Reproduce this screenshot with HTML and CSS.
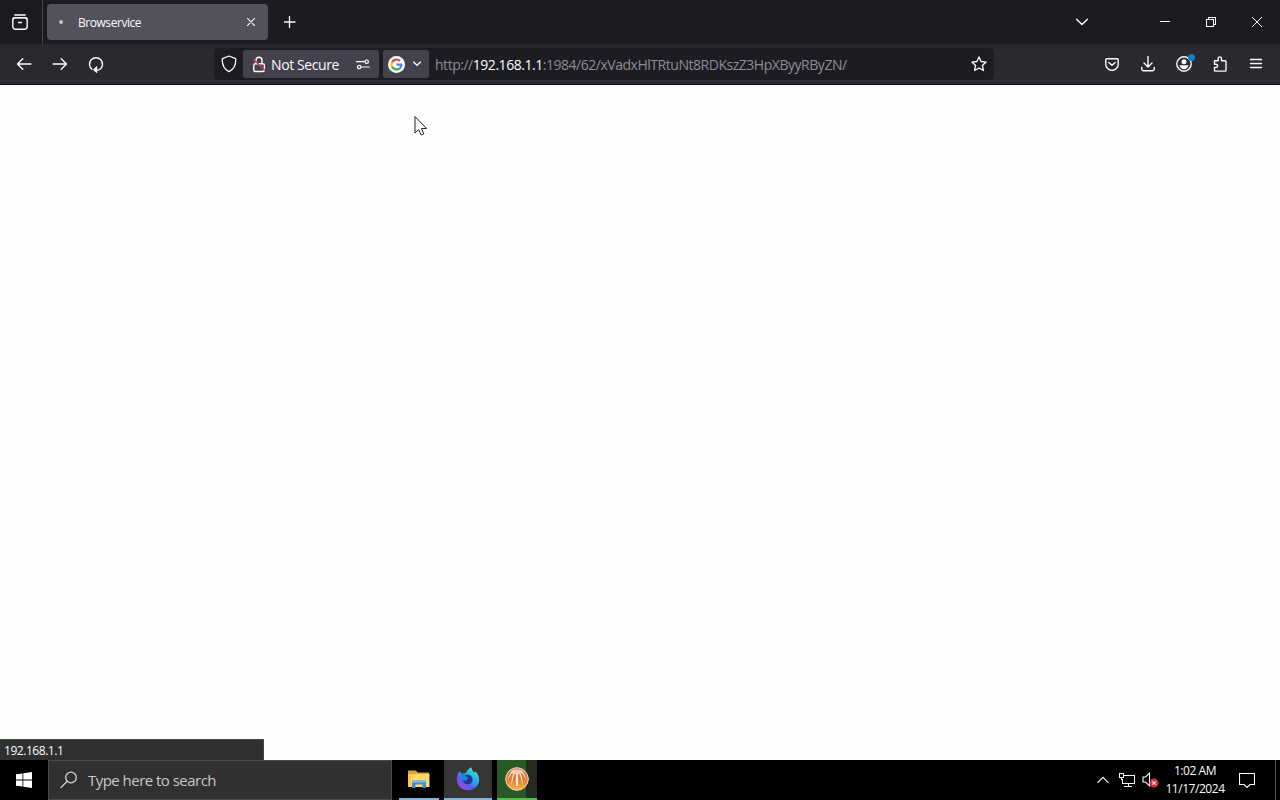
FILE: index.html
```
<!DOCTYPE html>
<html lang="en">
<head>
  <meta charset="utf-8">
  <meta name="viewport" content="width=device-width, initial-scale=1">
  <title>Browservice</title>
  <link rel="stylesheet" href="styles.css">
</head>
<body>
<div class="desktop">
  <!-- tab strip -->
  <div class="tabs-bar">
    <div class="view-button">
      <svg width="16" height="16" viewBox="0 0 16 16"><path d="M2.8 1h10.4" /><rect x=".8" y="3.8" width="14.4" height="11.4" rx="2.6"/><path d="M.9 5.4C1 4 2 3.6 3 3.6h10c1 0 2 .4 2.1 1.8M6.500 8.500h3"/></svg>
    </div>
    <div class="tab">
      <span class="tab-loading"></span>
      <span class="tab-title">Browservice</span>
      <svg class="tab-close" width="8" height="8" viewBox="0 0 8 8"><path d="M.4.4l7.2 7.2M7.6.4L.4 7.6"/></svg>
    </div>
    <svg class="new-tab" width="12" height="12" viewBox="0 0 12 12"><path d="M5.500.5v11M0 6h11"/></svg>
    <div class="window-buttons">
      <svg class="all-tabs" width="12" height="8" viewBox="0 0 12 8"><path d="M.6 1.2L6 6.4l5.4-5.2"/></svg>
      <div class="window-button"><svg width="10" height="10" viewBox="0 0 10 10" shape-rendering="crispEdges"><path d="M0 4.500h10"/></svg></div>
      <div class="window-button"><svg width="10" height="10" viewBox="0 0 10 10" shape-rendering="crispEdges"><path d="M.5 2.500h7v7h-7zM2.500 2V.5h7v7H8"/></svg></div>
      <div class="window-button"><svg width="10" height="10" viewBox="0 0 10 10"><path d="M0 0l10 10M10 0L0 10"/></svg></div>
    </div>
  </div>

  <!-- navigation toolbar -->
  <div class="nav-bar">
    <div class="tool"><svg width="16" height="16" viewBox="0 0 16 16"><path d="M14.800 8H1.600M6.800 2.800L1.500 8l5.300 5.200"/></svg></div>
    <div class="tool"><svg width="16" height="16" viewBox="0 0 16 16"><path d="M1.200 8h13.200M9.200 2.800L14.500 8l-5.300 5.200"/></svg></div>
    <div class="tool"><svg class="reload" width="16" height="18" viewBox="0 0 16 18"><path d="M4 13.300A6.500 6.500 0 1 1 12 13.300C11 14 9.800 14.300 8.600 14.400"/><path class="tip" d="M8.800 10.800v6L5.600 14z"/></svg></div>

    <div class="url-bar">
      <svg class="shield" width="16" height="18" viewBox="0 0 16 18"><path d="M8 1l6 2.300c.5.200.8.600.8 1.100 0 5-1.600 9.600-6.800 12.200C2.800 14 1.200 9.400 1.200 4.400c0-.5.300-.9.800-1.100z"/></svg>
      <div class="identity">
        <svg width="14" height="17" viewBox="0 0 14 17"><path d="M4 7.500V4.300a3 3 0 0 1 6 0v3.200"/><rect x="1.800" y="7.800" width="10.600" height="7.700" rx="1.500"/><path class="slash" d="M1.500 3.500l11 10.500"/></svg>
        <span>Not Secure</span>
      </div>
      <div class="permissions">
        <svg width="16" height="11" viewBox="0 0 16 11"><path d="M1.500 2.700h7.800M6.600 8h7.800"/><circle cx="11.700" cy="2.700" r="1.700"/><circle cx="4.200" cy="8" r="1.700"/></svg>
      </div>
      <div class="engine">
        <svg class="google" width="17" height="17" viewBox="0 0 17 17">
          <circle cx="8.500" cy="8.500" r="8.500" fill="#fff"/>
          <path stroke="#ea4335" d="M4.100 6.200A5 5 0 0 1 12 4.900"/>
          <path stroke="#fbbc05" d="M4.100 10.800a5 5 0 0 1 0-4.600"/>
          <path stroke="#34a853" d="M11.700 12.300a5 5 0 0 1-7.600-1.500"/>
          <path stroke="#4285f4" d="M8.500 8.600h5a5 5 0 0 1-1.800 3.700"/>
        </svg>
        <svg width="8" height="6" viewBox="0 0 8 6"><path d="M.5 1L4 4.300 7.500 1"/></svg>
      </div>
      <div class="url">http://<b>192.168.1.1</b>:1984/62/xVadxHlTRtuNt8RDKszZ3HpXByyRByZN/</div>
      <svg class="star" width="16" height="16" viewBox="0 0 16 16"><path d="M8 .9l2.100 4.600 5 .6-3.700 3.400 1 5L8 12l-4.400 2.500 1-5L.9 6.100l5-.6z"/></svg>
    </div>

    <div class="tools-right">
      <div class="tool"><svg width="14" height="13" viewBox="0 0 14 13"><path d="M1.800.8h10.400c.6 0 1 .4 1 1v4.400a6.200 6.200 0 0 1-12.400 0V1.800c0-.6.4-1 1-1z"/><path d="M3.800 4.500L7 7.300l3.200-2.800"/></svg></div>
      <div class="tool"><svg width="14" height="16" viewBox="0 0 14 16"><path d="M7 .5v10.300M3 7l4 4 4-4M.8 11.500v1.600c0 .9.700 1.600 1.600 1.600h9.200c.9 0 1.600-.7 1.600-1.600v-1.600"/></svg></div>
      <div class="tool account">
        <svg width="16" height="16" viewBox="0 0 16 16"><circle cx="8" cy="8" r="7.200"/><g class="person"><circle cx="8" cy="5.700" r="2.500"/><path d="M3.500 9.300h9c-.3 2.300-2.200 4-4.500 4s-4.200-1.700-4.500-4z"/></g></svg>
        <span class="badge"></span>
      </div>
      <div class="tool"><svg width="16" height="16" viewBox="0 0 16 16"><path d="M2.500 4.800h3.600V2.600a1.700 1.700 0 0 1 3.400 0v2.200h3.700c.5 0 .8.300.8.800v8.700c0 .5-.3.800-.8.800H3.300c-.5 0-.8-.3-.8-.8v-2.900H4a1.600 1.600 0 0 0 0-3.200H2.500z"/></svg></div>
      <div class="tool"><svg width="14" height="12" viewBox="0 0 14 12"><path d="M1.500 1.500h11M1.500 5.500h11M1.500 9.500h11"/></svg></div>
    </div>
  </div>

  <div class="page">
    <svg class="cursor" width="14" height="21" viewBox="0 0 14 21"><path d="M1 1v16l3.700-3.500L7.100 19l2.600-1.100-2.300-5.400h4.900z"/></svg>
    <div class="status">192.168.1.1</div>
  </div>

  <div class="taskbar">
    <div class="start">
      <svg width="16" height="16" viewBox="0 0 16 16"><path d="M0 2.300l6.500-.9v6.200H0zM7.300 1.300L16 0v7.600H7.300zM0 8.400h6.500v6.200L0 13.700zM7.300 8.400H16V16l-8.700-1.200z"/></svg>
    </div>
    <div class="search">
      <svg width="18" height="18" viewBox="0 0 18 18"><circle cx="11" cy="6.500" r="5.300"/><path d="M7.200 10.300L1 16.500"/></svg>
      <span>Type here to search</span>
    </div>
    <div class="task explorer">
      <svg width="22" height="20" viewBox="0 0 22 20">
        <path fill="#e3a126" d="M0 1.500h8l1.500 2H21v14H0z"/>
        <path fill="#ffd969" d="M0 5h21.500v13H0z"/>
        <path fill="#fcc64e" d="M0 5h3v13H0z"/>
        <path fill="#3f8ed0" d="M4 11.500h14V19h-3.500v-3.500h-7V19H4z"/>
        <path fill="#78bff0" d="M4 11.500h14v2H4z"/>
      </svg>
    </div>
    <div class="task firefox">
      <svg width="24" height="24" viewBox="0 0 24 24">
        <defs>
          <linearGradient id="flame" x1="20" y1="2" x2="5" y2="22" gradientUnits="userSpaceOnUse">
            <stop offset="0" stop-color="#48efc7"/>
            <stop offset=".35" stop-color="#24aee8"/>
            <stop offset=".7" stop-color="#5461f0"/>
            <stop offset="1" stop-color="#a843df"/>
          </linearGradient>
        </defs>
        <path fill="url(#flame)" d="M3.500 4.200l2.200 2.600L10 6c1-2.800 3-4.800 5.600-5.800-.2 2.700 1.500 4.200 3 5.500l.7-1.500c2.500 2.500 4.100 5.800 3.900 9.100C22.800 19 18 23.200 12 23.200S1 18.600.8 12.800c-.1-3.400.8-6.300 2.700-8.600z"/>
        <path fill="#263597" d="M8.500 8.500c3-1.800 8-.2 8 4.200 0 3-2.300 4.600-4.700 4.600-2.600 0-5-1.800-5-4.500 1.500 1.200 3.500 1 4.500-.5-.8-.8-1.500-.5-3-1.300-.8-.5-.7-1.700.2-2.500z"/>
        <path fill="#168bdb" d="M5 7c1.500-.6 3.700-.5 5 .4-.8.7-1 1.700-.2 2.200 1 .5 2.200.3 2.800.8-.9 1.600-2.600 1.400-4 2.500-2.200-1-4.100-3.300-3.600-5.900z"/>
      </svg>
    </div>
    <div class="task media">
      <svg width="24" height="24" viewBox="0 0 24 24">
        <defs>
          <linearGradient id="ball" x1="0" y1="0" x2="0" y2="1">
            <stop offset="0" stop-color="#d9825c"/>
            <stop offset=".5" stop-color="#e07a30"/>
            <stop offset="1" stop-color="#fcb548"/>
          </linearGradient>
        </defs>
        <circle cx="12" cy="12" r="11.300" fill="url(#ball)" stroke="#f3d8c4" stroke-width="1"/>
        <path fill="#fff0e0" d="M10 3C6 4.500 3.500 8 2.800 13.500 4.500 9 6.500 6 10 3zM10.800 3.500C7.500 7 6 12 6.500 18c1.200-5 2-10 4.300-14.500zM12 3.500c-1.200 5-1.500 10-.8 15.500h1.600c.7-5.500.4-10.500-.8-15.500zM13.200 3.500c3.300 3.500 4.800 8.500 4.300 14.500-1.200-5-2-10-4.300-14.500zM14 3c4 1.500 6.500 5 7.200 10.500C19.500 9 17.500 6 14 3z"/>
        <ellipse cx="12" cy="4.800" rx="6" ry="2.600" fill="#ffe9da" opacity=".6"/>
      </svg>
    </div>
    <div class="tray">
      <svg class="tray-up" width="12" height="8" viewBox="0 0 12 8"><path d="M.5 6.800L6 1.300l5.500 5.500"/></svg>
      <svg class="tray-net" width="16" height="14" viewBox="0 0 16 14" shape-rendering="crispEdges"><path d="M5 2.500h10.500v8H3.500V6M9.500 11v2.500M5 13.500h8M.5.500h4v4h-4zM2.500 4v3"/></svg>
      <svg class="tray-sound" width="18" height="16" viewBox="0 0 18 16"><path d="M1 5h2.500l4-3.800v12.600L3.500 10H1z"/><circle cx="12" cy="11" r="4.500" fill="#d92c3d" stroke="none"/><path d="M10.300 9.300l3.400 3.400M13.700 9.300l-3.400 3.400"/></svg>
      <div class="clock">
        <span class="time">1:02 AM</span>
        <span class="date">11/17/2024</span>
      </div>
      <svg class="tray-notes" width="16" height="17" viewBox="0 0 16 17"><path d="M.5 1.500h15v11H11l-3 3-3-3H.500z"/></svg>
      <div class="show-desktop"></div>
    </div>
  </div>
</div>
</body>
</html>
```
FILE: styles.css
```
* {
  box-sizing: border-box;
}
body {
  margin: 0;
  font-family: "Segoe UI", "Open Sans", "Noto Sans", sans-serif;
  color: #fbfbfe;
  overflow: hidden;
}
svg {
  display: block;
  flex: none;
  fill: none;
  stroke: #fbfbfe;
  stroke-width: 1.4;
  stroke-linecap: round;
  stroke-linejoin: round;
}
.desktop {
  display: flex;
  flex-direction: column;
  width: 1280px;
  height: 800px;
  white-space: nowrap;
}

/* tab strip */
.tabs-bar {
  display: flex;
  align-items: center;
  height: 44px;
  background: #1c1b20;
}
.view-button {
  display: flex;
  align-items: center;
  width: 43px;
  height: 44px;
  padding-left: 12px;
  border-right: 1px solid #45444c;
}
.tab {
  display: flex;
  align-items: center;
  width: 221px;
  height: 36px;
  margin-left: 4px;
  padding: 0 13px 0 12px;
  background: #53525c;
  border-radius: 4px;
}
.tab-loading {
  width: 4px;
  height: 4px;
  margin-right: 15px;
  border-radius: 50%;
  background: #c4c3ca;
}
.tab-title {
  flex: 1;
  padding-top: 1px;
  font-size: 12px;
  letter-spacing: -0.45px;
}
.tab-close,
.new-tab {
  stroke-width: 1.1;
}
.new-tab {
  margin-left: 16px;
  stroke-width: 1.3;
}
.window-buttons {
  display: flex;
  align-items: center;
  margin-left: auto;
}
.window-buttons svg {
  stroke-width: 1;
}
.window-buttons .all-tabs {
  margin-right: 54px;
  stroke-width: 1.4;
}
.window-button {
  display: flex;
  justify-content: center;
  width: 46px;
}

/* toolbar */
.nav-bar {
  display: flex;
  align-items: center;
  height: 41px;
  padding: 0 6px;
  background: #2a292f;
  border-bottom: 1px solid #0c0c0e;
}
.tool {
  display: flex;
  align-items: center;
  justify-content: center;
  position: relative;
  width: 36px;
  height: 36px;
}
.reload {
  margin-top: 2px;
}
.reload .tip {
  fill: #fbfbfe;
  stroke-width: 0.8;
}
.url-bar {
  display: flex;
  align-items: center;
  width: 780px;
  height: 32px;
  margin-left: 100px;
  padding: 0 7px;
  background: #1d1c22;
  border-radius: 4px;
}
.shield {
  margin-right: 6px;
  stroke-width: 1.3;
}
.identity,
.permissions,
.engine {
  display: flex;
  align-items: center;
  height: 28px;
  background: #42414d;
}
.identity {
  width: 105px;
  padding-left: 9px;
  font-size: 14px;
  letter-spacing: -0.4px;
  border-radius: 3px 0 0 3px;
}
.identity span {
  padding-top: 1px;
}
.identity svg {
  margin-right: 5px;
}
.identity .slash {
  stroke: #d8336f;
}
.permissions {
  width: 31px;
  padding-left: 7px;
  border-radius: 0 3px 3px 0;
}
.permissions svg {
  stroke-width: 1.2;
}
.engine {
  width: 46px;
  margin: 0 6px 0 4px;
  padding-left: 5px;
  gap: 8px;
  border-radius: 3px;
}
.google {
  stroke-width: 2.2;
  stroke-linecap: butt;
}
.google circle {
  stroke: none;
}
.url {
  flex: 1;
  padding-top: 1px;
  font-size: 14px;
  color: #8d8c94;
  letter-spacing: -0.47px;
}
.url b {
  font-weight: normal;
  color: #fbfbfe;
}
.star {
  stroke-width: 1.3;
}
.tools-right {
  display: flex;
  margin-left: auto;
}
.person {
  fill: #fbfbfe;
  stroke: none;
}
.badge {
  position: absolute;
  top: 8px;
  right: 7px;
  width: 7px;
  height: 7px;
  border-radius: 50%;
  background: #0a84c8;
}

/* page area */
.page {
  position: relative;
  flex: 1;
  background: #fefefe;
}
.cursor {
  position: absolute;
  left: 414px;
  top: 31px;
  fill: #fff;
  stroke: #222;
  stroke-width: 1;
  stroke-linejoin: miter;
}
.status {
  position: absolute;
  left: 0;
  bottom: 0;
  width: 264px;
  height: 21px;
  padding-left: 4px;
  background: #303030;
  border: 1px solid #48484a;
  border-width: 1px 1px 0 0;
  font-size: 12px;
  line-height: 21px;
  letter-spacing: -0.45px;
}

/* taskbar */
.taskbar {
  display: flex;
  height: 40px;
  background: #000;
}
.start {
  display: flex;
  align-items: center;
  justify-content: center;
  width: 48px;
}
.start svg {
  fill: #fff;
  stroke: none;
}
.search {
  display: flex;
  align-items: center;
  width: 344px;
  padding-left: 11px;
  gap: 10px;
  background: #303030;
  border: 1px solid #4c4c4c;
  font-size: 15px;
  color: #c8c8c8;
  letter-spacing: -0.53px;
}
.search svg {
  stroke: #d0d0d0;
  stroke-width: 1.3;
}
.task {
  display: flex;
  align-items: center;
  justify-content: center;
  border-bottom: 2px solid #76b9ed;
}
.task svg {
  stroke: none;
}
.explorer {
  width: 40px;
  margin-left: 7px;
}
.firefox {
  width: 48px;
  margin-left: 5px;
  background: #363636;
}
.media {
  width: 40px;
  margin-left: 5px;
  background: linear-gradient(90deg, #295a26 29px, #252b23 29px);
  border-bottom-color: #4fc43b;
}
.tray {
  display: flex;
  align-items: center;
  margin-left: auto;
}
.tray svg {
  stroke-width: 1.1;
  stroke-linecap: butt;
  stroke-linejoin: miter;
}
.tray-net {
  margin-left: 10px;
}
.tray-sound {
  margin-left: 7px;
}
.clock {
  display: flex;
  flex-direction: column;
  align-items: center;
  width: 60px;
  margin-left: 5px;
  font-size: 12px;
  line-height: 18px;
  letter-spacing: -0.45px;
}
.tray-notes {
  margin-left: 14px;
}
.show-desktop {
  width: 5px;
  height: 40px;
  margin-left: 20px;
  border-left: 1px solid #555;
}
```
